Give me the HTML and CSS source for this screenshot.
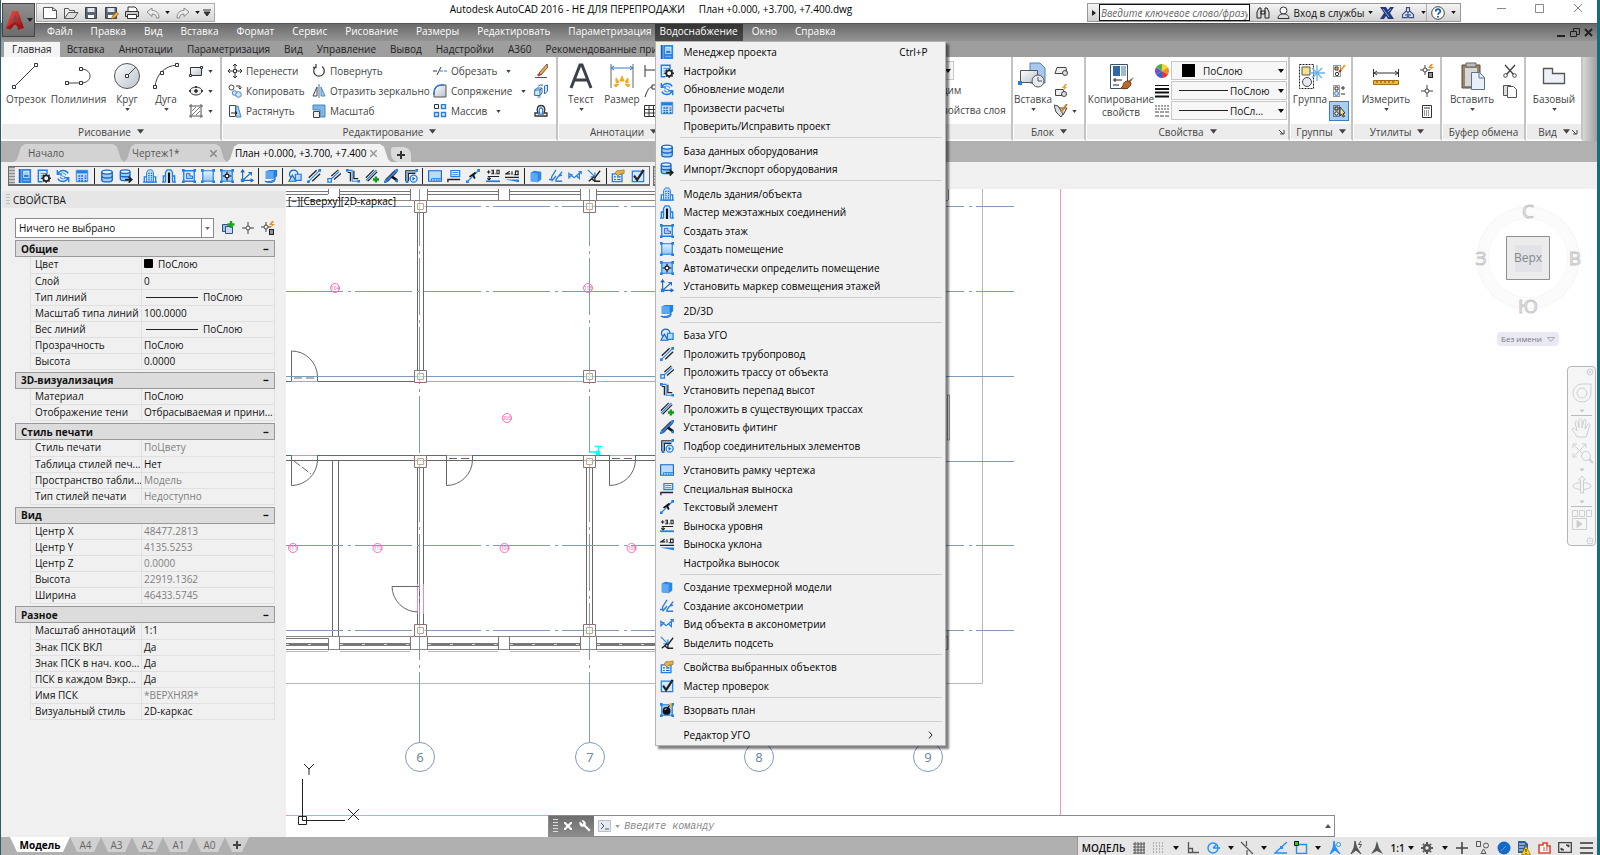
FILE: index.html
```html
<!DOCTYPE html>
<html lang="ru">
<head>
<meta charset="utf-8">
<title>Autodesk AutoCAD 2016 - План +0.000, +3.700, +7.400.dwg</title>
<link rel="stylesheet" href="styles.css">
</head>
<body>
<svg class="defs" aria-hidden="true">
  <defs>
    <linearGradient id="g-blue" x1="0" y1="0" x2="0" y2="1"><stop offset="0" stop-color="#e4f2ff"/><stop offset="1" stop-color="#8fc4f7"/></linearGradient>
    <linearGradient id="g-grey" x1="0" y1="0" x2="1" y2="1"><stop offset="0" stop-color="#fff"/><stop offset="1" stop-color="#b9c2cc"/></linearGradient>
    <linearGradient id="g-red" x1="0" y1="0" x2="1" y2="1"><stop offset="0" stop-color="#f0554d"/><stop offset="1" stop-color="#8c0a0c"/></linearGradient>
  </defs>
  <symbol id="caret" viewBox="0 0 6 4"><path d="M0 0h6L3 4z" fill="currentColor"/></symbol>
  <symbol id="launch" viewBox="0 0 6 6"><path d="M0 1l4 4M5 1v4H1" fill="none" stroke="currentColor"/></symbol>

  <symbol id="manager" viewBox="0 0 16 16"><path d="M1 0h14v16H1z" fill="#2b86ea"/><path d="M1 0h3v16H1z" fill="#0d5cb8"/><path d="M3.500 0v16" stroke="#9ccbff"/><path d="M6 2h7v8H6z" fill="#e4f2ff"/><path d="M7 3h5v4H7z" fill="#9fcbf8"/><path d="M7 7h5v2H7z" fill="#1668c4"/><path d="M6 13h7" stroke="#7db9f7"/></symbol>
  <symbol id="settings" viewBox="0 0 16 16"><path d="M1.500 14.500V1.500h10v4M1 14.500h5" fill="#dcecff" stroke="#1f7fe6" stroke-width="1.600"/><path d="M4 5h6M4 8h3M4 11h1.500" stroke="#1f7fe6"/><circle cx="10.500" cy="10.500" r="3.300" fill="#fff" stroke="#222" stroke-width="2"/><path d="M10.500 5v2M10.500 14v2M5 10.500h2M14 10.500h2M6.700 6.700l1.200 1.200M13.200 13.200l1.200 1.200M14.300 6.700l-1.200 1.200M7.900 13.200l-1.200 1.200" stroke="#222" stroke-width="1.600"/></symbol>
  <symbol id="refresh" viewBox="0 0 16 16"><path d="M1.500 1v5h5M2 5.500C5 .5 11 .5 14 5M14.500 15v-5h-5M14 10.500C11 15.500 5 15.500 2 11" fill="none" stroke="#1f7fe6" stroke-width="1.600"/><path d="M4.500 6c2-2 5-2 7 1M11.500 10c-2 2-5 2-7-1M4.500 6c1 3 4 1 7 4" fill="none" stroke="#4a9aeb" stroke-width="1.200"/></symbol>
  <symbol id="calc" viewBox="0 0 16 16"><path d="M1.500 1.500h13v13h-13z" fill="#b9dafa" stroke="#1f7fe6"/><path d="M2 2h12v3H2z" fill="#1f7fe6"/><path d="M4 8h2M7 8h2M4 11h2M7 11h2M4 13.500h2M7 13.500h2M11 10.500h2M11 13.500h2" stroke="#1668c4" stroke-width="1.600"/><path d="M11 8h2" stroke="#e4472f" stroke-width="1.600"/></symbol>
  <symbol id="db" viewBox="0 0 16 16"><path d="M2 3.500v9c0 3 12 3 12 0v-9" fill="#9fcbf8" stroke="#1668c4" stroke-width="1.500"/><ellipse cx="8" cy="3.500" rx="6" ry="2.300" fill="#e4f2ff" stroke="#1668c4" stroke-width="1.500"/><path d="M2 8c0 3 12 3 12 0" fill="none" stroke="#1668c4" stroke-width="1.500"/></symbol>
  <symbol id="dbx" viewBox="0 0 16 16"><path d="M1.500 3.500v8c0 2.500 11 2.500 11 0v-8" fill="#9fcbf8" stroke="#1668c4" stroke-width="1.500"/><ellipse cx="7" cy="3" rx="5.500" ry="2" fill="#e4f2ff" stroke="#1668c4" stroke-width="1.500"/><path d="M1.500 7c0 2.500 11 2.500 11 0" fill="none" stroke="#1668c4" stroke-width="1.500"/><path d="M7 12h6M11 9l3.500 3L11 15.500" fill="none" stroke="#222" stroke-width="2"/></symbol>
  <symbol id="build" viewBox="0 0 16 16"><path d="M4 15V4l2-3h4l2 3v11z" fill="#b9dafa" stroke="#1f7fe6"/><path d="M1.500 15V9H4M14.500 15V9H12M0 15h16" fill="none" stroke="#1f7fe6" stroke-width="1.500"/><path d="M6 5h1.500M9 5h1.500M6 7.500h1.500M9 7.500h1.500M6 10h1.500M9 10h1.500M6 12.500h1.500M9 12.500h1.500" stroke="#1668c4" stroke-width="1.300"/></symbol>
  <symbol id="wizard" viewBox="0 0 16 16"><path d="M4 15V4l2-3h4l2 3v11" fill="#d9ebff" stroke="#1f7fe6" stroke-width="1.500"/><path d="M1.500 15V8H4M14.500 15V8H12M0 15h4M12 15h4" fill="none" stroke="#1f7fe6" stroke-width="1.500"/><path d="M8 4v12" stroke="#111" stroke-width="2.500"/></symbol>
  <symbol id="floor" viewBox="0 0 16 16"><path d="M2 2h12v12H2z" fill="#dcecff" stroke="#1f7fe6" stroke-width="1.500"/><path d="M5 5v6h7V8H9V5z" fill="#9fcbf8" stroke="#1668c4"/><path d="M0 0h3v3H0zM13 0h3v3h-3zM0 13h3v3H0zM13 13h3v3h-3z" fill="#1f7fe6"/></symbol>
  <symbol id="room" viewBox="0 0 16 16"><path d="M2 2h12v12H2z" fill="url(#g-blue)" stroke="#1f7fe6" stroke-width="1.300"/><path d="M0 0h3v3H0zM13 0h3v3h-3zM0 13h3v3H0zM13 13h3v3h-3z" fill="#1f7fe6"/></symbol>
  <symbol id="auto" viewBox="0 0 16 16"><path d="M2 2h12v12H2z" fill="#9fcbf8" stroke="#1f7fe6" stroke-width="1.300"/><path d="M0 0h3v3H0zM13 0h3v3h-3zM0 13h3v3H0zM13 13h3v3h-3z" fill="#1f7fe6"/><path d="M8 3v10M3 8h10" stroke="#111" stroke-width="1.300"/><circle cx="8" cy="8" r="2.200" fill="#fff" stroke="#111" stroke-width="1.300"/></symbol>
  <symbol id="marker" viewBox="0 0 16 16"><path d="M3 1v12h12M3 13l10-9M1 4l2-3 2 3M12 11l3 2-3 2M9.500 4H13v3.500" fill="none" stroke="#1668c4" stroke-width="1.300"/><path d="M1 11h4v4H1z" fill="#1f7fe6"/></symbol>
  <symbol id="mode3d" viewBox="0 0 16 16"><path d="M2 2.500L6 1h9v7l-3 3H2z" fill="#1f7fe6"/><path d="M2 2.500h9V11H2z" fill="#5ba9f5"/><path d="M1 14c4 1 9 0 12-3l-1 3c-3 2-8 2-11 0z" fill="#5ba9f5" stroke="#1668c4"/></symbol>
  <symbol id="ugo" viewBox="0 0 16 16"><circle cx="6.500" cy="6" r="4.800" fill="#dcecff" stroke="#1668c4" stroke-width="1.400"/><path d="M1 14l4-7 4 7z" fill="#b9dafa" stroke="#1668c4" stroke-width="1.200"/><path d="M8.500 6h6.500v7H8.500z" fill="#b9dafa" stroke="#1f7fe6" stroke-width="1.400"/></symbol>
  <symbol id="pipe" viewBox="0 0 16 16"><path d="M2 10L11 1.500M6 14L15 5.500" stroke="#222" stroke-width="1.500"/><path d="M1.500 14.500L14.500 1.500" stroke="#2b86ea" stroke-width="1.300"/><path d="M0 13h3v3H0zM13 0h3v3h-3z" fill="#1f7fe6"/></symbol>
  <symbol id="trace" viewBox="0 0 16 16"><path d="M5 8l8-7M8 12l8-7" stroke="#222" stroke-width="1.400"/><path d="M4 12L14 3" stroke="#2b86ea" stroke-width="1.400"/><path d="M1 11h4v4H1z" fill="#fff" stroke="#1f7fe6" stroke-width="1.500"/></symbol>
  <symbol id="drop" viewBox="0 0 16 16"><path d="M2 4h3v10M9 2v9h5" fill="none" stroke="#222" stroke-width="1.400"/><path d="M1 1.500h6V14h7" fill="none" stroke="#2b86ea" stroke-width="1.300"/><path d="M0 0h3v3H0zM13 12.500h3v3h-3z" fill="#1f7fe6"/></symbol>
  <symbol id="exist" viewBox="0 0 16 16"><path d="M1 10L10 1M3 14L14 3" stroke="#222" stroke-width="1.300"/><path d="M1 13L13 1" stroke="#2b86ea" stroke-width="1.400"/><path d="M12.500 8.500v7M9 12h7" stroke="#139a1c" stroke-width="2.800"/></symbol>
  <symbol id="fitting" viewBox="0 0 16 16"><path d="M1 12L12 1l3 3L4 15z" fill="#3d4c60"/><path d="M8 8l7 5" stroke="#111" stroke-width="3"/><path d="M2 14L14 2.500" stroke="#2b86ea" stroke-width="1.500"/><path d="M0 13h3v3H0zM13 0h3v3h-3zM13 12h3v3h-3z" fill="#1f7fe6"/></symbol>
  <symbol id="connect" viewBox="0 0 16 16"><path d="M2 14V2h11M5 14V5h8" fill="none" stroke="#222" stroke-width="1.300"/><path d="M3.500 14V3.500H14" fill="none" stroke="#2b86ea"/><path d="M13 0h3v3h-3zM2 13h3v3H2z" fill="#1f7fe6"/><circle cx="11" cy="11" r="4" fill="#dcecff" stroke="#1f7fe6" stroke-width="1.500"/><path d="M9.700 8.800v4.400l3.300-2.200z" fill="#1668c4"/></symbol>
  <symbol id="frame" viewBox="0 0 16 16"><path d="M.7 2h14.600v12H.7z" fill="#b9dafa" stroke="#1668c4" stroke-width="1.300"/><path d="M4 14v-3h11M7 11v3M10 11v3M12.500 11v3" fill="none" stroke="#1f7fe6"/></symbol>
  <symbol id="callout" viewBox="0 0 16 16"><path d="M4.500 1.700h10v7h-10z" fill="#dcecff" stroke="#1f7fe6" stroke-width="1.400"/><path d="M6 4h7M6 6.500h7" stroke="#1f7fe6"/><path d="M1 15v-3h14" fill="none" stroke="#222" stroke-width="1.500"/></symbol>
  <symbol id="textel" viewBox="0 0 16 16"><path d="M2 14L14 2" stroke="#2b86ea" stroke-width="1.300"/><path d="M4 9l7-5M8 6l2 5" stroke="#111" stroke-width="2"/><path d="M0 13h3v3H0zM13 0h3v3h-3z" fill="#1f7fe6"/></symbol>
  <symbol id="level" viewBox="0 0 16 16"><path d="M1 3.500h4M3 1.500v4M6 1.500h2.500v4H6M6.500 3.500h2M10 5.500h1M12.500 1.500H15v4h-2.500zM2 8.500h13M3.500 8.500v4M1.500 10.500l2 2 2-2" fill="none" stroke="#222" stroke-width="1.200"/><path d="M0 14h16" stroke="#1f7fe6" stroke-width="2"/></symbol>
  <symbol id="slope" viewBox="0 0 16 16"><path d="M5.500 2.500L1 5.500h5M8 2.500v4M10 6.500h1M12 2.500h3v4h-3zM0 9.500h16" fill="none" stroke="#222" stroke-width="1.300"/><path d="M0 12h16v3z" fill="#1f7fe6"/></symbol>
  <symbol id="cube" viewBox="0 0 16 16"><path d="M2 4l4-2 8 1v9l-4 3-8-1z" fill="#2b86ea"/><path d="M2 4l8 1v10l-8-1z" fill="#5ba9f5"/></symbol>
  <symbol id="axo" viewBox="0 0 16 16"><path d="M8 1L3 9v3H0M8 8l-5 6M15 3L8 12v2h7M11 8l4-1" fill="none" stroke="#2b7fdc" stroke-width="1.500"/></symbol>
  <symbol id="objaxo" viewBox="0 0 16 16"><path d="M1 11V5l6 5 6-5v6l-3-3M1 10l4-4M8 9l7-6M12 3h3v3" fill="none" stroke="#2b7fdc" stroke-width="1.400"/></symbol>
  <symbol id="subnet" viewBox="0 0 16 16"><path d="M1 1l8 8M9 4v5H4" fill="none" stroke="#2b86ea" stroke-width="1.500"/><path d="M15 2l-6 8v4h6M8 9l-6 5M5 11l4 3" fill="none" stroke="#222" stroke-width="1.500"/></symbol>
  <symbol id="props" viewBox="0 0 16 16"><path d="M1.500 5.500h11v9h-11z" fill="#dcecff" stroke="#1f7fe6" stroke-width="1.500"/><path d="M3.500 9h2M7 9h4M3.500 12h2M7 12h4" stroke="#1668c4" stroke-width="1.300"/><path d="M5 5c0-3 3-4 5-3l5-1v4l-5 1-2 2z" fill="#e3b04b" stroke="#8a6418" stroke-width=".7"/></symbol>
  <symbol id="check" viewBox="0 0 16 16"><path d="M1.500 2.500h13v12h-13z" fill="#d4e8fd" stroke="#1f7fe6" stroke-width="1.400"/><path d="M3.500 7.500l3.500 5L14.500 1" fill="none" stroke="#222" stroke-width="2.500"/></symbol>
  <symbol id="bomb" viewBox="0 0 16 16"><path d="M2 2h12v12H2z" fill="#9fcbf8" stroke="#1f7fe6" stroke-width="1.300"/><path d="M0 0h3v3H0zM13 0h3v3h-3zM0 13h3v3H0zM13 13h3v3h-3z" fill="#1f7fe6"/><circle cx="7.500" cy="9" r="4.500" fill="#111"/><path d="M9 5l3-3" stroke="#111" stroke-width="1.500"/><path d="M10 0l3 1 1 4-3-1z" fill="#f2b61b"/><path d="M5.500 8a2 2 0 0 1 2-1.500" stroke="#fff" fill="none"/></symbol>

  <symbol id="new" viewBox="0 0 16 14"><path d="M1.500 1.500h9l4 3v8h-13z" fill="#fff" stroke="#555"/><path d="M10.500 1.500v3h4" fill="none" stroke="#555"/></symbol>
  <symbol id="open" viewBox="0 0 16 14"><path d="M1.500 12.500v-10h4l1 2h5v2" fill="#eee" stroke="#555"/><path d="M1.500 12.500l4-6h9.500l-4 6z" fill="#ddd" stroke="#555"/></symbol>
  <symbol id="save" viewBox="0 0 14 14"><path d="M1.500 1.500h11v11h-11z" fill="#5a6470" stroke="#39424c"/><path d="M3.500 2h7v4h-7z" fill="#dfe6ee"/><path d="M4 9h6v3H4z" fill="#fff"/></symbol>
  <symbol id="saveas" viewBox="0 0 15 14"><path d="M1.500 1.500h11v11h-11z" fill="#5a6470" stroke="#39424c"/><path d="M3.500 2h7v4h-7z" fill="#dfe6ee"/><path d="M4 9h5v3H4z" fill="#fff"/><path d="M7.500 13l1-3 4-4 2 2-4 4z" fill="#f0b030" stroke="#8a5a10" stroke-width=".7"/></symbol>
  <symbol id="print" viewBox="0 0 16 14"><path d="M4 5V1h7l2 2v2" fill="#fff" stroke="#333"/><path d="M1.500 5.500h13v5h-13z" fill="#ccc" stroke="#333"/><path d="M3.500 8.500h9v4h-9z" fill="#fff" stroke="#333"/></symbol>
  <symbol id="undo" viewBox="0 0 14 12"><path d="M1 5l5-4v2.500c4 0 7 2 7 7.500h-2.500C10.500 8 9 7 6 7v2.500z" fill="#eee" stroke="#8a8a8a"/></symbol>
  <symbol id="redo" viewBox="0 0 14 12"><path d="M13 5L8 1v2.500C4 3.500 1 5.500 1 11h2.500C3.500 8 5 7 8 7v2.500z" fill="#eee" stroke="#8a8a8a"/></symbol>
  <symbol id="point" viewBox="0 0 12 12"><path d="M6 0v12M0 6h12" stroke="#444"/><circle cx="6" cy="6" r="2" fill="#fff" stroke="#444"/></symbol>
  <symbol id="quick" viewBox="0 0 14 14"><path d="M5 1v10M0 6h10" stroke="#444"/><circle cx="5" cy="6" r="2" fill="#fff" stroke="#444"/><path d="M11 0l-3 4h3l-2 3 5-4h-3l2-3z" fill="#f28a1c"/><path d="M8 8h5v6H8z" fill="#222"/><path d="M9 10h3M9 12h3" stroke="#fff"/></symbol>
</svg>

<div class="app">
  <header class="header">
    <button class="app-button" aria-label="Меню приложения">
      <svg width="20" height="22" viewBox="0 0 20 22"><path d="M1 19L7 2h6l6 17-6 2-1-5H8l-3 5z" fill="url(#g-red)"/><path d="M8 12l2-6 2 6z" fill="#555"/><path d="M1 19l9-6 9 6-5 0-4-4-4 5z" fill="#a01316"/></svg>
      <svg width="6" height="4"><use href="#caret"/></svg>
    </button>
    <div class="titlebar">
      <div class="quick-access">
        <button aria-label="Создать"><svg width="16" height="14"><use href="#new"/></svg></button>
        <button aria-label="Открыть"><svg width="16" height="14"><use href="#open"/></svg></button>
        <button aria-label="Сохранить"><svg width="14" height="14"><use href="#save"/></svg></button>
        <button aria-label="Сохранить как"><svg width="15" height="14"><use href="#saveas"/></svg></button>
        <button aria-label="Печать"><svg width="16" height="14"><use href="#print"/></svg></button>
        <button aria-label="Отменить"><svg width="14" height="12"><use href="#undo"/></svg></button>
        <button class="slim" aria-label="Список отмен"><svg width="5" height="3"><use href="#caret"/></svg></button>
        <button aria-label="Повторить"><svg width="14" height="12"><use href="#redo"/></svg></button>
        <button class="slim" aria-label="Список повторов"><svg width="5" height="3"><use href="#caret"/></svg></button>
        <button class="slim" aria-label="Настроить панель"><svg width="8" height="8" viewBox="0 0 8 8"><path d="M0 1h8M1 3h6l-3 4z" stroke="#333" fill="#333"/></svg></button>
      </div>
      <h1 class="title"><span>Autodesk AutoCAD 2016 - НЕ ДЛЯ ПЕРЕПРОДАЖИ</span><span>План +0.000, +3.700, +7.400.dwg</span></h1>
      <div class="infocenter">
        <button class="expand" aria-label="Свернуть поиск"><svg width="4" height="6" viewBox="0 0 4 6"><path d="M0 0l4 3-4 3z" fill="#222"/></svg></button>
        <input class="search" type="text" aria-label="Поиск" placeholder="Введите ключевое слово/фразу">
        <button aria-label="Найти"><svg width="14" height="13" viewBox="0 0 14 13"><path d="M1 12V6l2-4h2v10zM13 12V6l-2-4H9v10zM5 5h4v3H5z" fill="#ddd" stroke="#222"/></svg></button>
        <button class="sign-in"><svg width="13" height="13" viewBox="0 0 13 13"><circle cx="6.500" cy="4.500" r="3.500" fill="#fff" stroke="#333"/><path d="M1 12.500c0-3 2-4 4-4.500h3c2 .5 4 1.500 4 4.500z" fill="#ddd" stroke="#333"/></svg>Вход в службы<svg width="5" height="3"><use href="#caret"/></svg></button>
        <button aria-label="Exchange"><svg width="14" height="12" viewBox="0 0 14 12"><path d="M0 0h6l2 3 2-3h4l-4 6 4 6H8L6 9l-2 3H0l4-6z" fill="#253a7c"/><path d="M3 2l6 8M11 2L8 5" stroke="#7fb2ee"/></svg></button>
        <button aria-label="A360"><svg width="14" height="12" viewBox="0 0 14 12"><path d="M5.500.7h3v3l4 4v3H8l-1-1.500-1 1.500H1.500v-3l4-4zM5.500 4l3 4M8.500 4l-3 4M4 8h6" fill="none" stroke="#35518f" stroke-width="1.200"/></svg><svg width="5" height="3"><use href="#caret"/></svg></button>
        <button class="help" aria-label="Справка"><svg width="14" height="14" viewBox="0 0 14 14"><circle cx="7" cy="7" r="6.300" fill="#fff" stroke="#444"/><path d="M4.800 5.500c0-3 4.500-3 4.500-.3C9.300 7 7 6.800 7 8.800M7 10v1.600" fill="none" stroke="#1858b8" stroke-width="1.800"/></svg><svg width="5" height="3"><use href="#caret"/></svg></button>
      </div>
      <div class="window-controls">
        <button aria-label="Свернуть"><svg width="10" height="10" viewBox="0 0 10 10"><path d="M0 5.500h9" stroke="#888"/></svg></button>
        <button aria-label="Развернуть"><svg width="10" height="10" viewBox="0 0 10 10"><path d="M.5 1.500h8v8h-8z" fill="none" stroke="#888"/></svg></button>
        <button aria-label="Закрыть"><svg width="10" height="10" viewBox="0 0 10 10"><path d="M1 1l8 8M9 1L1 9" stroke="#888"/></svg></button>
      </div>
    </div>
    <nav class="menubar" aria-label="Главное меню">
      <button>Файл</button><button>Правка</button><button>Вид</button><button>Вставка</button><button>Формат</button><button>Сервис</button><button>Рисование</button><button>Размеры</button><button>Редактировать</button><button class="last">Параметризация</button>
      <div class="menu-open">
        <button aria-expanded="true">Водоснабжение</button>
        <ul class="dropdown" role="menu">
          <li><button><svg class="ico"><use href="#manager"/></svg>Менеджер проекта<kbd>Ctrl+P</kbd></button></li>
          <li><button><svg class="ico"><use href="#settings"/></svg>Настройки</button></li>
          <li><button><svg class="ico"><use href="#refresh"/></svg>Обновление модели</button></li>
          <li><button><svg class="ico"><use href="#calc"/></svg>Произвести расчеты</button></li>
          <li><button><i class="ico"></i>Проверить/Исправить проект</button></li>
          <li class="divider"></li>
          <li><button><svg class="ico"><use href="#db"/></svg>База данных оборудования</button></li>
          <li><button><svg class="ico"><use href="#dbx"/></svg>Импорт/Экспорт оборудования</button></li>
          <li class="divider"></li>
          <li><button><svg class="ico"><use href="#build"/></svg>Модель здания/объекта</button></li>
          <li><button><svg class="ico"><use href="#wizard"/></svg>Мастер межэтажных соединений</button></li>
          <li><button><svg class="ico"><use href="#floor"/></svg>Создать этаж</button></li>
          <li><button><svg class="ico"><use href="#room"/></svg>Создать помещение</button></li>
          <li><button><svg class="ico"><use href="#auto"/></svg>Автоматически определить помещение</button></li>
          <li><button><svg class="ico"><use href="#marker"/></svg>Установить маркер совмещения этажей</button></li>
          <li class="divider"></li>
          <li><button><svg class="ico"><use href="#mode3d"/></svg>2D/3D</button></li>
          <li class="divider"></li>
          <li><button><svg class="ico"><use href="#ugo"/></svg>База УГО</button></li>
          <li><button><svg class="ico"><use href="#pipe"/></svg>Проложить трубопровод</button></li>
          <li><button><svg class="ico"><use href="#trace"/></svg>Проложить трассу от объекта</button></li>
          <li><button><svg class="ico"><use href="#drop"/></svg>Установить перепад высот</button></li>
          <li><button><svg class="ico"><use href="#exist"/></svg>Проложить в существующих трассах</button></li>
          <li><button><svg class="ico"><use href="#fitting"/></svg>Установить фитинг</button></li>
          <li><button><svg class="ico"><use href="#connect"/></svg>Подбор соединительных элементов</button></li>
          <li class="divider"></li>
          <li><button><svg class="ico"><use href="#frame"/></svg>Установить рамку чертежа</button></li>
          <li><button><svg class="ico"><use href="#callout"/></svg>Специальная выноска</button></li>
          <li><button><svg class="ico"><use href="#textel"/></svg>Текстовый элемент</button></li>
          <li><button><svg class="ico"><use href="#level"/></svg>Выноска уровня</button></li>
          <li><button><svg class="ico"><use href="#slope"/></svg>Выноска уклона</button></li>
          <li><button><i class="ico"></i>Настройка выносок</button></li>
          <li class="divider"></li>
          <li><button><svg class="ico"><use href="#cube"/></svg>Создание трехмерной модели</button></li>
          <li><button><svg class="ico"><use href="#axo"/></svg>Создание аксонометрии</button></li>
          <li><button><svg class="ico"><use href="#objaxo"/></svg>Вид объекта в аксонометрии</button></li>
          <li><button><svg class="ico"><use href="#subnet"/></svg>Выделить подсеть</button></li>
          <li class="divider"></li>
          <li><button><svg class="ico"><use href="#props"/></svg>Свойства выбранных объектов</button></li>
          <li><button><svg class="ico"><use href="#check"/></svg>Мастер проверок</button></li>
          <li class="divider"></li>
          <li><button><svg class="ico"><use href="#bomb"/></svg>Взорвать план</button></li>
          <li class="divider"></li>
          <li><button><i class="ico"></i>Редактор УГО<svg class="sub" width="5" height="8" viewBox="0 0 5 8"><path d="M1 .5L4 4 1 7.500" fill="none" stroke="#222"/></svg></button></li>
        </ul>
      </div>
      <button>Окно</button><button>Справка</button>
      <div class="doc-controls">
        <button aria-label="Свернуть документ"><svg width="10" height="10" viewBox="0 0 10 10"><path d="M1 8h8" stroke="#222" stroke-width="2"/></svg></button>
        <button aria-label="Восстановить документ"><svg width="10" height="10" viewBox="0 0 10 10"><path d="M3.500 3V.5h6v6H7M.5 3.500h6v5h-6z" fill="none" stroke="#222"/></svg></button>
        <button aria-label="Закрыть документ"><svg width="9" height="9" viewBox="0 0 9 9"><path d="M1 1l7 7M8 1L1 8" stroke="#222" stroke-width="2"/></svg></button>
      </div>
    </nav>
  </header>

  <nav class="ribbon-tabs" aria-label="Лента">
    <button class="active">Главная</button><button>Вставка</button><button>Аннотации</button><button>Параметризация</button><button>Вид</button><button>Управление</button><button>Вывод</button><button>Надстройки</button><button>A360</button><button>Рекомендованные приложения</button>
  </nav>

  <section class="ribbon">
    <div class="panel p-draw">
      <div class="panel-body">
        <button class="big"><svg width="30" height="30" viewBox="0 0 30 30"><path d="M3 26L25 4" stroke="#444"/><path d="M1.500 24.500h3v3h-3zM23.500 2.500h3v3h-3z" fill="#fff" stroke="#333"/></svg>Отрезок</button>
        <button class="big"><svg width="30" height="30" viewBox="0 0 30 30"><path d="M3 22h14M17 22c12 0 12-14 0-14" fill="none" stroke="#444"/><path d="M1.500 20.500h3v3h-3zM15.500 20.500h3v3h-3zM15.500 6.500h3v3h-3z" fill="#fff" stroke="#333"/></svg>Полилиния</button>
        <button class="big"><svg width="30" height="30" viewBox="0 0 30 30"><circle cx="15" cy="15" r="12.500" fill="url(#g-grey)" stroke="#555"/><path d="M15 15l9-9" stroke="#444"/><path d="M13.500 13.500h3v3h-3z" fill="#fff" stroke="#333"/></svg>Круг<svg class="drop" width="5" height="3"><use href="#caret"/></svg></button>
        <button class="big"><svg width="30" height="30" viewBox="0 0 30 30"><path d="M4 26C5 14 13 5 26 4" fill="none" stroke="#444"/><path d="M2.500 24.500h3v3h-3zM9.500 10.500h3v3h-3zM24.500 2.500h3v3h-3z" fill="#fff" stroke="#333"/></svg>Дуга<svg class="drop" width="5" height="3"><use href="#caret"/></svg></button>
        <div class="rows">
          <button aria-label="Прямоугольник"><svg width="16" height="16" viewBox="0 0 16 16"><path d="M2.500 4.500h11v8h-11z" fill="url(#g-grey)" stroke="#333"/><path d="M1.500 11.500h2v2h-2zM12.500 3.500h2v2h-2z" fill="#fff" stroke="#333"/></svg><svg width="5" height="3"><use href="#caret"/></svg></button>
          <button aria-label="Эллипс"><svg width="16" height="16" viewBox="0 0 16 16"><ellipse cx="8" cy="8" rx="6" ry="4" fill="#eee" stroke="#333"/><path d="M8 6v4M6 8h4M1 8h2M13 8h2M8 3v2" stroke="#222" stroke-width="1.500"/></svg><svg width="5" height="3"><use href="#caret"/></svg></button>
          <button aria-label="Штриховка"><svg width="16" height="16" viewBox="0 0 16 16"><path d="M3 1v14M13 1v14M1 3h14M1 13h14" stroke="#555"/><path d="M4 8l4-4M4 12l8-8M8 12l4-4" stroke="#777"/></svg><svg width="5" height="3"><use href="#caret"/></svg></button>
        </div>
      </div>
      <button class="panel-title">Рисование<svg width="7" height="5"><use href="#caret"/></svg></button>
    </div>

    <div class="panel p-edit">
      <div class="panel-body">
        <div class="rows">
          <button><svg width="14" height="14" viewBox="0 0 14 14"><path d="M7 0v14M0 7h14M5 2l2-2 2 2M5 12l2 2 2-2M2 5L0 7l2 2M12 5l2 2-2 2" fill="none" stroke="#333"/><path d="M5.500 5.500h3v3h-3z" fill="#fff" stroke="#333"/></svg>Перенести</button>
          <button><svg width="14" height="14" viewBox="0 0 14 14"><circle cx="3.500" cy="3.500" r="2.500" fill="#fff" stroke="#444"/><circle cx="6.500" cy="9" r="2.300" fill="#cfe4f8" stroke="#4b87bd"/><circle cx="10.500" cy="10.500" r="2.800" fill="#cfe4f8" stroke="#4b87bd"/><path d="M8 2h4v3M10.500 3.500L12 5l1.500-1.500" fill="none" stroke="#333"/></svg>Копировать</button>
          <button><svg width="14" height="14" viewBox="0 0 14 14"><path d="M1.500 1.500h6v11h-6z" fill="#fff" stroke="#444"/><path d="M8 2h2l3 11H8z" fill="#a8cdee" stroke="#4b87bd"/><path d="M3 9h6M7 7l2 2-2 2" fill="none" stroke="#222"/></svg>Растянуть</button>
        </div>
        <div class="rows">
          <button><svg width="14" height="14" viewBox="0 0 14 14"><path d="M4 2.500a5.300 5.300 0 1 0 6 0M4 0v3.500H1" fill="none" stroke="#444" stroke-width="1.300"/></svg>Повернуть</button>
          <button><svg width="14" height="14" viewBox="0 0 14 14"><path d="M5 3v9H1z" fill="#fff" stroke="#444"/><path d="M9 3v9h4z" fill="#a8cdee" stroke="#4b87bd"/><path d="M7 0v14" stroke="#3b76ad"/></svg>Отразить зеркально</button>
          <button><svg width="14" height="14" viewBox="0 0 14 14"><path d="M1 1h12v12H8V6H1z" fill="#7db5e8" stroke="#4b87bd"/><path d="M1.500 7.500h6v6h-6z" fill="#eee" stroke="#444"/></svg>Масштаб</button>
        </div>
        <div class="rows">
          <button><svg width="14" height="14" viewBox="0 0 14 14"><path d="M0 7h4M8 3l-4 8" stroke="#333"/><path d="M7 7h3M11 7h3" stroke="#2f7bd0"/></svg>Обрезать<svg class="gap" width="5" height="3"><use href="#caret"/></svg></button>
          <button><svg width="14" height="14" viewBox="0 0 14 14"><path d="M1 13V9C1 4 4 1 9 1h4v12z" fill="url(#g-grey)" stroke="#555"/><path d="M1 11V9C1 4 4 1 9 1h2" fill="none" stroke="#2f7bd0" stroke-width="1.500"/></svg>Сопряжение<svg class="gap" width="5" height="3"><use href="#caret"/></svg></button>
          <button><svg width="14" height="14" viewBox="0 0 14 14"><path d="M1.500.5h4v4h-4z" fill="#fff" stroke="#333"/><path d="M8.500.5h4v4h-4zM1.500 8.500h4v4h-4zM8.500 8.500h4v4h-4z" fill="#d6e9fb" stroke="#2f7bd0" stroke-width="1.400"/></svg>Массив<svg class="gap" width="5" height="3"><use href="#caret"/></svg></button>
        </div>
        <div class="rows">
          <button aria-label="Стереть"><svg width="14" height="14" viewBox="0 0 14 14"><path d="M13 0L5 9l2 2 7-8z" fill="#e8a85a" stroke="#5a3a18" stroke-width=".8"/><path d="M5 9l-2 2 1.500 1.500L7 11z" fill="#c33"/><path d="M1 13.500h12" stroke="#555"/></svg></button>
          <button aria-label="Расчленить"><svg width="14" height="14" viewBox="0 0 14 14"><path d="M.7 6l2-2H8v5l-2 2.500H.7zM.7 6H6v5.500M6 6l2-2M4 2.500L6 1h3M10.500 2l3-1v6l-3 3zM3.500 13h3" fill="#d6e9fb" stroke="#2f6fae"/></svg></button>
          <button aria-label="Подобие"><svg width="14" height="14" viewBox="0 0 14 14"><path d="M1 12V9h3C2 4 4 1.500 7 1.500S12 4 10 9h3v3z" fill="none" stroke="#333" stroke-width="1.300"/><path d="M4 10h2C4.500 6 5 4 7 4s2.500 2 1 6h2" fill="none" stroke="#2f7bd0" stroke-width="1.300"/></svg></button>
        </div>
      </div>
      <button class="panel-title">Редактирование<svg width="7" height="5"><use href="#caret"/></svg></button>
    </div>

    <div class="panel p-anno">
      <div class="panel-body">
        <button class="big"><svg width="30" height="30" viewBox="0 0 30 30"><path d="M5 27L14 4h2l9 23M9 19h12" fill="none" stroke="#3c4048" stroke-width="3"/></svg>Текст<svg class="drop" width="5" height="3"><use href="#caret"/></svg></button>
        <button class="big"><svg width="30" height="30" viewBox="0 0 30 30"><path d="M4 3v24M26 3v24" stroke="#666"/><path d="M4 7h22M7 5L4 7l3 2M23 5l3 2-3 2" stroke="#2f7bd0" fill="none"/><path d="M15 15l2 5h-4zM9 17l3 4-3 1zM21 17l-3 4 3 1zM7 24l5-1-3 3zM23 24l-5-1 3 3z" fill="#f5a623" stroke="#f5a623"/></svg>Размер</button>
        <div class="rows">
          <button aria-label="Линейный"><svg width="14" height="14" viewBox="0 0 14 14"><path d="M1 1v12M1 6h13" stroke="#333"/></svg></button>
          <button aria-label="Выноска"><svg width="14" height="14" viewBox="0 0 14 14"><path d="M1 13C4 4 6 3 8 3M8 1h4v4H8z" fill="none" stroke="#333"/></svg></button>
          <button aria-label="Таблица"><svg width="14" height="14" viewBox="0 0 14 14"><path d="M.5 1.500h13v11H.5zM.5 5.500h13M.5 9h13M5 2v11M9.500 2v11" fill="#fff" stroke="#333"/></svg></button>
        </div>
      </div>
      <button class="panel-title">Аннотации<svg width="7" height="5"><use href="#caret"/></svg></button>
    </div>

    <div class="panel p-layers">
      <div class="panel-body">
        <div class="rows">
          <div class="combo"><select aria-label="Слой"><option>0</option></select><svg width="6" height="4"><use href="#caret"/></svg></div>
          <button>Сделать текущим</button>
          <button>Копировать свойства слоя</button>
        </div>
      </div>
      <button class="panel-title">Слои<svg width="7" height="5"><use href="#caret"/></svg></button>
    </div>

    <div class="panel p-block">
      <div class="panel-body">
        <button class="big"><svg width="30" height="30" viewBox="0 0 30 30"><path d="M12 2h10l5 5v15H12z" fill="#a9c8ee" stroke="#5580b8"/><path d="M2.500 9.500h17v12h-17z" fill="url(#g-grey)" stroke="#555"/><circle cx="20" cy="20" r="6" fill="#e6eaef" stroke="#555"/><path d="M20 16v4h4" fill="none" stroke="#555"/><path d="M0 20h4v4H0z" fill="#2f7bd0"/></svg>Вставка<svg class="drop" width="5" height="3"><use href="#caret"/></svg></button>
        <div class="rows">
          <button aria-label="Создать блок"><svg width="14" height="14" viewBox="0 0 14 14"><path d="M3 3.500h9l1 6H1z" fill="#eee" stroke="#444"/><circle cx="11" cy="9" r="2.500" fill="#ddd" stroke="#444"/></svg></button>
          <button aria-label="Редактор блоков"><svg width="14" height="14" viewBox="0 0 14 14"><path d="M1.500 5.500h8v6h-8z" fill="#eee" stroke="#444"/><circle cx="10" cy="10" r="2.500" fill="#ddd" stroke="#444"/><path d="M11 0L8 4h2l-1 3 4-4h-2l2-3z" fill="#f0a020"/></svg></button>
          <button aria-label="Атрибуты"><svg width="14" height="14" viewBox="0 0 14 14"><path d="M0 1l4 1 5 8-2 3-5-5zM5 4h8l-4 7" fill="#ddd" stroke="#444"/><path d="M13 0L7 8" stroke="#d08020" stroke-width="2"/></svg><svg width="5" height="3"><use href="#caret"/></svg></button>
        </div>
      </div>
      <button class="panel-title">Блок<svg width="7" height="5"><use href="#caret"/></svg></button>
    </div>

    <div class="panel p-props">
      <div class="panel-body">
        <button class="big"><svg width="30" height="30" viewBox="0 0 30 30"><path d="M4.500 3.500h17v24h-17z" fill="#fff" stroke="#3c5068"/><path d="M7 5h7v10H7z" fill="#2f67a8"/><path d="M15 5h5v10h-5z" fill="#9fb8d4"/><path d="M7 19h9M9 17v4M7 24h6" stroke="#222"/><path d="M28 16l-6 4 2 2z" fill="#8a6a48"/><path d="M22 20c-4 0-5 3-5 5l-2 2c4 2 10 0 10-5z" fill="#c0692c" stroke="#6b3a14"/></svg>Копирование<br>свойств</button>
        <div class="property-grid">
          <svg width="14" height="14" viewBox="0 0 14 14"><path d="M7 7L7 0A7 7 0 0 1 13 3.500z" fill="#f6d52c"/><path d="M7 7l6-3.500a7 7 0 0 1 0 7z" fill="#f08a24"/><path d="M7 7l6 3.500A7 7 0 0 1 7 14z" fill="#d93a3a"/><path d="M7 7v7a7 7 0 0 1-6-3.500z" fill="#3a5fd0"/><path d="M7 7l-6 3.500a7 7 0 0 1 0-7z" fill="#7c4bc0"/><path d="M7 7L1 3.500A7 7 0 0 1 7 0z" fill="#4db04d"/></svg>
          <div class="combo first"><i class="swatch"></i><select aria-label="Цвет"><option>ПоСлою</option></select><svg width="6" height="4"><use href="#caret"/></svg></div>
          <svg width="14" height="14" viewBox="0 0 14 14"><path d="M0 1.500h14" stroke="#111"/><path d="M0 5h14" stroke="#111" stroke-width="2"/><path d="M0 8.500h14M0 12.500h14" stroke="#111" stroke-width="2"/></svg>
          <div class="combo"><i class="line"></i><select aria-label="Вес линий"><option>ПоСлою</option></select><svg width="6" height="4"><use href="#caret"/></svg></div>
          <svg width="14" height="14" viewBox="0 0 14 14"><path d="M0 2h14M0 5h14" stroke="#444" stroke-dasharray="2 1"/><path d="M0 8h14M0 12h14" stroke="#444" stroke-dasharray="4 1"/></svg>
          <div class="combo"><i class="line"></i><select aria-label="Тип линий"><option>ПоСл...</option></select><svg width="6" height="4"><use href="#caret"/></svg></div>
        </div>
      </div>
      <button class="panel-title">Свойства<svg width="7" height="5"><use href="#caret"/></svg><svg class="launcher" width="6" height="6"><use href="#launch"/></svg></button>
    </div>

    <div class="panel p-groups">
      <div class="panel-body">
        <button class="big"><svg width="30" height="30" viewBox="0 0 30 30"><path d="M4.500 3.500h14v24h-14z" fill="none" stroke="#222" stroke-dasharray="2 1"/><path d="M7 6h8v8H7z" fill="#f4e28a" stroke="#555"/><circle cx="12" cy="21" r="4.500" fill="#e6eaef" stroke="#444"/><path d="M22 4v16M14 12h16M17 7l10 10M27 7L17 17" stroke="#69b3e7" stroke-width="1.300"/></svg>Группа</button>
        <div class="rows">
          <button aria-label="Разгруппировать"><svg width="14" height="14" viewBox="0 0 14 14"><path d="M1.500 1.500h7v11h-7z" fill="none" stroke="#333" stroke-dasharray="1 1"/><path d="M3 3h3v3H3z" fill="#f0d060" stroke="#333"/><circle cx="5" cy="10" r="1.700" fill="none" stroke="#333"/><path d="M13 1L9 6" stroke="#f0a020" stroke-width="2"/><path d="M9 6L7 8" stroke="#c22" stroke-width="2"/></svg></button>
          <button aria-label="Редактировать группу"><svg width="14" height="14" viewBox="0 0 14 14"><path d="M1.500 1.500h6v11h-6z" fill="none" stroke="#333" stroke-dasharray="1 1"/><path d="M3 3h3v3H3z" fill="#fff" stroke="#333"/><circle cx="4.500" cy="9.500" r="2" fill="#cfe4f8" stroke="#2f7bd0"/><path d="M9 4h4M11 2v4M9 10h4" stroke="#333"/></svg></button>
          <button class="pressed" aria-label="Выбор группы" aria-pressed="true"><svg width="14" height="14" viewBox="0 0 14 14"><path d="M1.500 1.500h6v11h-6z" fill="none" stroke="#222" stroke-dasharray="1 1"/><path d="M3 3h3v3H3z" fill="#f0d060" stroke="#222"/><circle cx="4.500" cy="9.500" r="1.700" fill="#fff" stroke="#222"/><path d="M8 3l5 6-2 .5 1.500 3-1.500.5-1.500-3L8 12z" fill="#f8e88a" stroke="#333"/></svg></button>
        </div>
      </div>
      <button class="panel-title">Группы<svg width="7" height="5"><use href="#caret"/></svg></button>
    </div>

    <div class="panel p-utils">
      <div class="panel-body">
        <button class="big"><svg width="30" height="30" viewBox="0 0 30 30"><path d="M2.500 8v8M27.500 8v8M3 12h24M6 10l-3 2 3 2M24 10l3 2-3 2" fill="none" stroke="#333"/><path d="M2.500 19.500h25v4h-25z" fill="#f3b93a" stroke="#a06c10"/><path d="M6 20v2M10 20v2M14 20v2M18 20v2M22 20v2" stroke="#704a08"/></svg>Измерить<svg class="drop" width="5" height="3"><use href="#caret"/></svg></button>
        <div class="rows">
          <button aria-label="Быстрый выбор"><svg width="14" height="14"><use href="#quick"/></svg></button>
          <button aria-label="Точка"><svg width="12" height="12"><use href="#point"/></svg></button>
          <button aria-label="Калькулятор"><svg width="10" height="13" viewBox="0 0 10 13"><path d="M.5.500h9v12h-9z" fill="#fff" stroke="#333"/><path d="M2 3h6" stroke="#333"/><path d="M2 6h6M2 8h6M2 10h6" stroke="#333" stroke-dasharray="1 1"/></svg></button>
        </div>
      </div>
      <button class="panel-title">Утилиты<svg width="7" height="5"><use href="#caret"/></svg></button>
    </div>

    <div class="panel p-clip">
      <div class="panel-body">
        <button class="big"><svg width="30" height="30" viewBox="0 0 30 30"><path d="M5 4h18v23H5z" fill="#9a8468" stroke="#5a4a38"/><path d="M8 7h12v18H8z" fill="#d8d8d8"/><path d="M9 2h10v4H9z" fill="#bbb" stroke="#666"/><path d="M14.500 11.500h8l5 5v12h-13z" fill="#e9eff8" stroke="#5a7390"/><path d="M22 12v5h5" fill="none" stroke="#5a7390"/></svg>Вставить<svg class="drop" width="5" height="3"><use href="#caret"/></svg></button>
        <div class="rows">
          <button aria-label="Вырезать"><svg width="14" height="14" viewBox="0 0 14 14"><path d="M2 1l9 10M12 1L3 11" stroke="#444" stroke-width="1.400"/><circle cx="2.500" cy="11.500" r="1.800" fill="#fff" stroke="#444"/><circle cx="11.500" cy="11.500" r="1.800" fill="#fff" stroke="#444"/></svg></button>
          <button aria-label="Копировать"><svg width="14" height="14" viewBox="0 0 14 14"><path d="M.5 1.500h7v10h-7z" fill="#ddd" stroke="#555"/><path d="M4.500 2.500h6l3 3v8h-9z" fill="#fff" stroke="#555"/></svg></button>
        </div>
      </div>
      <button class="panel-title">Буфер обмена</button>
    </div>

    <div class="panel p-view">
      <div class="panel-body">
        <button class="big"><svg width="30" height="30" viewBox="0 0 30 30"><path d="M4.500 7.500h9v5h12v10h-21z" fill="#eef2f7" stroke="#555" stroke-width="1.300"/></svg>Базовый<svg class="drop" width="5" height="3"><use href="#caret"/></svg></button>
      </div>
      <button class="panel-title">Вид<svg width="7" height="5"><use href="#caret"/></svg><svg class="launcher" width="6" height="6"><use href="#launch"/></svg></button>
    </div>
  </section>

  <nav class="file-tabs" aria-label="Файлы">
    <button class="tab t-start">Начало</button>
    <button class="tab t-doc">Чертеж1*<svg width="7" height="7" viewBox="0 0 7 7"><path d="M0 0l7 7M7 0L0 7" stroke="#888" stroke-width="1.500"/></svg></button>
    <button class="tab t-plan active">План +0.000, +3.700, +7.400<svg width="7" height="7" viewBox="0 0 7 7"><path d="M0 0l7 7M7 0L0 7" stroke="#999" stroke-width="1.500"/></svg></button>
    <button class="add" aria-label="Новый чертеж"><svg width="8" height="8" viewBox="0 0 8 8"><path d="M4 0v8M0 4h8" stroke="#333" stroke-width="2"/></svg></button>
  </nav>

  <div class="toolbar-row">
    <div class="toolbar" role="toolbar" aria-label="Водоснабжение">
      <i class="grip"></i>
      <button aria-label="Менеджер"><svg class="tico"><use href="#manager"/></svg></button>
      <button aria-label="Настройки"><svg class="tico"><use href="#settings"/></svg></button>
      <button aria-label="Обновление"><svg class="tico"><use href="#refresh"/></svg></button>
      <button aria-label="Расчеты"><svg class="tico"><use href="#calc"/></svg></button>
      <i class="sep"></i>
      <button aria-label="База данных"><svg class="tico"><use href="#db"/></svg></button>
      <button aria-label="Импорт"><svg class="tico"><use href="#dbx"/></svg></button>
      <i class="sep"></i>
      <button aria-label="Модель здания"><svg class="tico"><use href="#build"/></svg></button>
      <button aria-label="Мастер соединений"><svg class="tico"><use href="#wizard"/></svg></button>
      <button aria-label="Этаж"><svg class="tico"><use href="#floor"/></svg></button>
      <button aria-label="Помещение"><svg class="tico"><use href="#room"/></svg></button>
      <button aria-label="Определить помещение"><svg class="tico"><use href="#auto"/></svg></button>
      <button aria-label="Маркер"><svg class="tico"><use href="#marker"/></svg></button>
      <i class="sep"></i>
      <button aria-label="2D/3D"><svg class="tico"><use href="#mode3d"/></svg></button>
      <i class="sep"></i>
      <button aria-label="База УГО"><svg class="tico"><use href="#ugo"/></svg></button>
      <button aria-label="Трубопровод"><svg class="tico"><use href="#pipe"/></svg></button>
      <button aria-label="Трасса"><svg class="tico"><use href="#trace"/></svg></button>
      <button aria-label="Перепад"><svg class="tico"><use href="#drop"/></svg></button>
      <button aria-label="Существующие трассы"><svg class="tico"><use href="#exist"/></svg></button>
      <button aria-label="Фитинг"><svg class="tico"><use href="#fitting"/></svg></button>
      <button aria-label="Соединительные элементы"><svg class="tico"><use href="#connect"/></svg></button>
      <i class="sep"></i>
      <button aria-label="Рамка"><svg class="tico"><use href="#frame"/></svg></button>
      <button aria-label="Специальная выноска"><svg class="tico"><use href="#callout"/></svg></button>
      <button aria-label="Текст"><svg class="tico"><use href="#textel"/></svg></button>
      <button aria-label="Уровень"><svg class="tico"><use href="#level"/></svg></button>
      <button aria-label="Уклон"><svg class="tico"><use href="#slope"/></svg></button>
      <i class="sep"></i>
      <button aria-label="Модель"><svg class="tico"><use href="#cube"/></svg></button>
      <button aria-label="Аксонометрия"><svg class="tico"><use href="#axo"/></svg></button>
      <button aria-label="Вид объекта"><svg class="tico"><use href="#objaxo"/></svg></button>
      <button aria-label="Подсеть"><svg class="tico"><use href="#subnet"/></svg></button>
      <i class="sep"></i>
      <button aria-label="Свойства"><svg class="tico"><use href="#props"/></svg></button>
      <button aria-label="Проверка"><svg class="tico"><use href="#check"/></svg></button>
    </div>
    <div class="toolbar stub"><i class="grip"></i></div>
  </div>

  <main class="workspace">
    <aside class="properties">
      <h2><i class="grip light"></i>СВОЙСТВА</h2>
      <div class="selection">
        <div class="picker"><select aria-label="Выбранные объекты"><option>Ничего не выбрано</option></select><span><svg width="5" height="3"><use href="#caret"/></svg></span></div>
        <button aria-label="Добавить в набор"><svg width="14" height="14" viewBox="0 0 14 14"><path d="M1.500 3.500h7v7h-7z" fill="#9dbde8" stroke="#35507a"/><path d="M4.500 5.500h7v7h-7z" fill="#c6daf5" stroke="#35507a"/><path d="M10 0v7M6.500 3.500h7" stroke="#17a81a" stroke-width="2.500"/></svg></button>
        <button aria-label="Выбрать объекты"><svg width="12" height="12"><use href="#point"/></svg></button>
        <button aria-label="Быстрый выбор"><svg width="14" height="14"><use href="#quick"/></svg></button>
      </div>
      <section class="group">
        <button class="group-head">Общие<b>−</b></button>
        <table>
          <tr><th>Цвет</th><td><i class="dot"></i>ПоСлою</td></tr>
          <tr><th>Слой</th><td>0</td></tr>
          <tr><th>Тип линий</th><td><i class="rule"></i>ПоСлою</td></tr>
          <tr><th>Масштаб типа линий</th><td>100.0000</td></tr>
          <tr><th>Вес линий</th><td><i class="rule"></i>ПоСлою</td></tr>
          <tr><th>Прозрачность</th><td>ПоСлою</td></tr>
          <tr><th>Высота</th><td>0.0000</td></tr>
        </table>
      </section>
      <section class="group">
        <button class="group-head">3D-визуализация<b>−</b></button>
        <table>
          <tr><th>Материал</th><td>ПоСлою</td></tr>
          <tr><th>Отображение тени</th><td>Отбрасываемая и прини...</td></tr>
        </table>
      </section>
      <section class="group">
        <button class="group-head">Стиль печати<b>−</b></button>
        <table>
          <tr><th>Стиль печати</th><td class="off">ПоЦвету</td></tr>
          <tr><th>Таблица стилей печ...</th><td>Нет</td></tr>
          <tr><th>Пространство табли...</th><td class="off">Модель</td></tr>
          <tr><th>Тип стилей печати</th><td class="off">Недоступно</td></tr>
        </table>
      </section>
      <section class="group">
        <button class="group-head">Вид<b>−</b></button>
        <table>
          <tr><th>Центр X</th><td class="off">48477.2813</td></tr>
          <tr><th>Центр Y</th><td class="off">4135.5253</td></tr>
          <tr><th>Центр Z</th><td class="off">0.0000</td></tr>
          <tr><th>Высота</th><td class="off">22919.1362</td></tr>
          <tr><th>Ширина</th><td class="off">46433.5745</td></tr>
        </table>
      </section>
      <section class="group">
        <button class="group-head">Разное<b>−</b></button>
        <table>
          <tr><th>Масштаб аннотаций</th><td>1:1</td></tr>
          <tr><th>Знак ПСК ВКЛ</th><td>Да</td></tr>
          <tr><th>Знак ПСК в нач. коо...</th><td>Да</td></tr>
          <tr><th>ПСК в каждом Вэкр...</th><td>Да</td></tr>
          <tr><th>Имя ПСК</th><td class="off">*ВЕРХНЯЯ*</td></tr>
          <tr><th>Визуальный стиль</th><td>2D-каркас</td></tr>
        </table>
      </section>
    </aside>

    <div class="canvas">
      <svg class="drawing" aria-label="План этажа">
        <g transform="translate(-286 -189)" fill="none">
          <path d="M286 683.500H982.500V189" stroke="#b8b8b8"/>
          <path d="M286 815.500H1060.500V189" stroke="#f592c4"/>
          <g stroke="#8f8585">
            <path d="M286 200.500H414M427 200.500H584M596 200.500H948M286 636.500H414M427 636.500H584M596 636.500H948"/>
            <path d="M286 649.500H948V630M948.500 189V200"/>
          </g>
          <g stroke="#777">
            <path d="M286 191.500h42.500M328.500 189v5M339.500 200V189M339.500 191.500h71M410.500 189V200M427.500 200V189M427.500 191.500h71M498.500 189V200M509.500 200V189M509.500 191.500h71M580.500 189V200M596.500 200V189M596.500 191.500H670M286 194.500h42M339.500 194.500h71M427.500 194.500h71M509.500 194.500h71M596.500 194.500H660"/>
            <path d="M286 638.500h42.500v12M339.500 650V636.500M410.500 650V636.500M427.500 650V636.500M498.500 650V636.500M509.500 650V636.500M580.500 650V636.500M596.500 650V636.500"/>
          </g>
          <path d="M286 644.500h42M340 644.500h70M428 644.500h70M510 644.500h70M597 644.500h60" stroke="#777" stroke-width="3"/>
          <path d="M286 644.500h42M340 644.500h70M428 644.500h70M510 644.500h70M597 644.500h60" stroke="#ddd" stroke-dasharray="3 19"/>
          <path d="M286 651.500h42M340 651.500h70M428 651.500h70M510 651.500h70M597 651.500h60" stroke="#bbb"/>
          <path d="M947.500 395h2v45h-2zM947.500 636v14" stroke="#999"/>
          <g stroke="#6e6468">
            <path d="M417.500 212V371M423.500 212V371M417.500 467V584M423.500 467V584M417.500 614V624M423.500 614V624M586.500 467V624M592.500 467V624M332.500 461V636M338.500 461V636"/>
            <path d="M286 381.500H414M286 455.500H670M286 460.500H670"/>
          </g>
          <path d="M426 381.500H583M597 381.500H670M291 455.500h27M446 455.500h27M609 455.500h27M291 381.500h27M417.500 584v30M423.500 584v30" stroke="#fa7fbe"/>
          <g stroke="#666">
            <path d="M291.500 381V351A26 26 0 0 1 317.500 376.500V381M291.500 455V485.500A26 26 0 0 0 317.500 460V455M446.500 455V485.500A26 26 0 0 0 472.500 460V455M609.500 455V485.500A26 26 0 0 0 635.500 460V455M419 586.500H392A26 26 0 0 0 418 612"/>
            <path d="M294 378h9M306 378h9M449 458.500h9M461 458.500h9M612 458.500h9M624 458.500h9M294 461l17 13M419.500 588v22" stroke-dasharray="8 2"/>
          </g>
          <g stroke="#7f9bb8">
            <path d="M286 206.500H1014M286 291.500H1014M286 545.500H1014M286 630.500H1014" stroke-dasharray="57 5 3 4"/>
            <path d="M286 376.500H1014M670 461.500H1014"/>
            <path d="M419.500 189V742M589.500 189V742" stroke-dasharray="57 5 3 4"/>
            <path d="M419.500 676V742M589.500 676V742"/>
            <circle cx="420" cy="757" r="14.500"/><circle cx="590" cy="757" r="14.500"/><circle cx="759" cy="757" r="14.500"/><circle cx="928" cy="757" r="14.500"/>
          </g>
          <g fill="#fff" fill-opacity=".4" stroke="#8a7478">
            <path d="M414.500 200.500h12v12h-12zM583.500 200.500h12v12h-12zM414.500 370.500h12v12h-12zM583.500 370.500h12v12h-12zM414.500 455.500h12v12h-12zM583.500 455.500h12v12h-12zM414.500 624.500h12v12h-12zM583.500 624.500h12v12h-12z"/>
            <path d="M417.500 203.500h6v6h-6zM586.500 203.500h6v6h-6zM417.500 373.500h6v6h-6zM586.500 373.500h6v6h-6zM417.500 458.500h6v6h-6zM586.500 458.500h6v6h-6zM417.500 627.500h6v6h-6zM586.500 627.500h6v6h-6z" stroke="#b9ad8c"/>
          </g>
          <g stroke="#fa6fb6"><circle cx="335" cy="288" r="4.500"/><circle cx="588" cy="288" r="4.500"/><circle cx="507" cy="418" r="4.500"/><circle cx="293" cy="548" r="4.500"/><circle cx="377.500" cy="548" r="4.500"/><circle cx="504.500" cy="548" r="4.500"/><circle cx="631.500" cy="548" r="4.500"/></g>
          <g class="room-no"><text x="335" y="290">104</text><text x="588" y="290">113</text><text x="507" y="420">300</text><text x="293" y="550">111</text><text x="378" y="550">110</text><text x="505" y="550">109</text><text x="632" y="550">108</text></g>
          <path d="M589 452h8M598.500 446v8M595 446.500h7" stroke="#0ff" stroke-width="1.500"/><circle cx="598" cy="453" r="2.500" fill="#0ff"/>
          <g class="axis-no"><text x="420" y="762">6</text><text x="590" y="762">7</text><text x="759" y="762">8</text><text x="928" y="762">9</text></g>
          <path d="M302.500 779V820.500H345M298.500 816.500h8v8h-8zM304 764l5 5 5-5M309 769v6M348 809l11 11M359 809l-11 11" stroke="#222"/>
        </g>
      </svg>
      <button class="view-label">[−][Сверху][2D-каркас]</button>

      <div class="viewcube">
        <svg width="106" height="106" viewBox="0 0 106 106" fill="none">
          <circle cx="53" cy="53" r="46" stroke="#fbfbfb" stroke-width="10"/><circle cx="53" cy="53" r="51" stroke="#f5f5f5"/><circle cx="53" cy="53" r="40" stroke="#f5f5f5"/>
          <path d="M31.500 31.500h43v43h-43z" fill="#ececec" stroke="#8f8f8f"/><path d="M40 40h27v27H40z" fill="#e1e3e6"/>
          <g class="compass"><text x="53" y="13">С</text><text x="6" y="60">З</text><text x="100" y="60">В</text><text x="53" y="108">Ю</text></g>
          <text class="face" x="53" y="57">Верх</text>
        </svg>
        <button>Без имени<svg width="8" height="5" viewBox="0 0 8 5"><path d="M.5.500h7L4 4.500z" fill="none" stroke="#aaa"/></svg></button>
      </div>

      <div class="navbar" role="toolbar" aria-label="Навигация">
        <svg width="27" height="178" viewBox="0 0 27 178" fill="none" stroke="#cfcfcf">
          <circle cx="22" cy="5" r="3"/><path d="M20.500 3.500l3 3M23.500 3.500l-3 3"/>
          <path d="M14 17h9v9a9 9 0 1 1-9-9z"/><circle cx="14" cy="26" r="5"/><path d="M12 43h4l-2 2z" fill="#bbb"/>
          <path d="M3 48.500h21M3 139.500h21" stroke="#bbb"/>
          <path d="M9 70c-2-4-5-7-5-8 1-2 3 0 5 2l-2-9c1-2 2-1 3 1l1 5V53c1-2 2-2 3 0v8l2-8c1-1 2-1 2 1l-1 8 3-5c1-1 2 0 2 1l-4 12z"/>
          <path d="M5 77l13 13M18 77L5 90M5 81v-4h4M14 77h4v4M5 86v4h4"/><circle cx="18" cy="89" r="4.500" fill="#f6f6f6"/><path d="M21 92l4 4" stroke-width="2"/><path d="M12 102h4l-2 2z" fill="#bbb"/>
          <ellipse cx="14" cy="119" rx="9" ry="3.500"/><path d="M12.500 126v-13h-2l3.500-4 3.500 4h-2v13z" fill="#f4f4f4"/><path d="M12 134h4l-2 2z" fill="#bbb"/>
          <path d="M4.500 143.500h5v6h-5zM11.500 143.500h5v6h-5zM18.500 143.500h5v6h-5zM4.500 151.500h14v11h-14z"/><path d="M9 153.500v7l5-3.500z" fill="#ccc"/>
          <circle cx="22" cy="174" r="3"/><path d="M20.500 174h3"/>
        </svg>
      </div>

      <div class="command">
        <div class="command-tools">
          <i class="grip white"></i>
          <button aria-label="Закрыть"><svg width="8" height="8" viewBox="0 0 8 8"><path d="M0 0l8 8M8 0L0 8" stroke="#fff" stroke-width="2"/></svg></button>
          <button aria-label="Настройка"><svg width="12" height="12" viewBox="0 0 12 12"><path d="M1 1.500L3.500 4l1-1L2.500.5a3.300 3.300 0 0 1 4 4.500L11.500 10 10 11.500 5 6.500A3.300 3.300 0 0 1 .5 2.500z" fill="#fff"/></svg></button>
        </div>
        <button class="prompt" aria-label="Последние команды"><svg width="13" height="12" viewBox="0 0 13 12"><path d="M.5.500h12v11H.5z" fill="#e6eaf0" stroke="#b8bfc8"/><path d="M3 3l3 3-3 3M7 9h4" fill="none" stroke="#555"/></svg><svg width="5" height="3"><use href="#caret"/></svg></button>
        <input type="text" aria-label="Команда" placeholder="Введите команду">
        <button class="history" aria-label="История команд"><svg width="6" height="4" viewBox="0 0 6 4"><path d="M0 4h6L3 0z" fill="#555"/></svg></button>
      </div>
    </div>
  </main>

  <footer class="bottom">
    <nav class="layout-tabs" aria-label="Листы">
      <button class="active">Модель</button><button>A4</button><button>A3</button><button>A2</button><button>A1</button><button>A0</button>
      <button class="plus" aria-label="Новый лист"><svg width="8" height="8" viewBox="0 0 8 8"><path d="M4 0v8M0 4h8" stroke="#444" stroke-width="2"/></svg></button>
    </nav>
    <div class="status">
      <button class="wide">МОДЕЛЬ</button>
      <button aria-label="Сетка"><svg width="12" height="12" viewBox="0 0 12 12"><path d="M2 0v12M5 0v12M8 0v12M11 0v12M0 2h12M0 5h12M0 8h12M0 11h12" stroke="#555"/></svg></button>
      <button aria-label="Шаг"><svg width="12" height="12" viewBox="0 0 12 12"><path d="M0 1h12M0 4h12M0 7h12M0 10h12" stroke="#777" stroke-dasharray="1 2"/></svg></button>
      <button class="arrow" aria-label="Параметры шага"><svg width="6" height="4"><use href="#caret"/></svg></button>
      <button class="man" aria-label="Орто"><svg width="12" height="12" viewBox="0 0 12 12"><path d="M1.500 0v10.500H12M1.500 6.500h4v4" fill="none" stroke="#555" stroke-width="1.300"/></svg></button>
      <button aria-label="Полярное отслеживание"><svg width="13" height="12" viewBox="0 0 13 12"><circle cx="6" cy="6" r="5" fill="none" stroke="#2090ff" stroke-width="1.400"/><path d="M6 6h7M6 6l4-4" stroke="#2090ff" stroke-width="1.300"/></svg></button>
      <button class="arrow" aria-label="Углы"><svg width="6" height="4"><use href="#caret"/></svg></button>
      <button aria-label="Изоплоскость"><svg width="14" height="14" viewBox="0 0 14 14"><path d="M1 1l12 12M6.500 0v5M7 9v5" stroke="#555" stroke-width="1.200"/></svg></button>
      <button class="arrow" aria-label="Плоскости"><svg width="6" height="4"><use href="#caret"/></svg></button>
      <button aria-label="Отслеживание"><svg width="14" height="12" viewBox="0 0 14 12"><path d="M13 0L1 11h12" fill="none" stroke="#2090ff" stroke-width="1.400"/><path d="M6 4h3v3H6z" fill="#2090ff"/></svg></button>
      <button aria-label="Привязка"><svg width="14" height="13" viewBox="0 0 14 13"><path d="M2.500 3.500h10v9h-10z" fill="none" stroke="#2090ff" stroke-width="1.400"/><path d="M.5.500h4v4h-4z" fill="#2ecc40" stroke="#111"/></svg></button>
      <button class="arrow" aria-label="Виды привязок"><svg width="6" height="4"><use href="#caret"/></svg></button>
      <button class="man" aria-label="Аннотативность"><svg width="14" height="14" viewBox="0 0 14 14"><path d="M6 0l1.500 6 4.500 7-5-4-5 4 3-6z" fill="#2090ff" stroke="#2090ff"/><circle cx="10.500" cy="3.500" r="2" fill="#e6f2ff" stroke="#2090ff"/></svg></button>
      <button class="man" aria-label="Автомасштаб"><svg width="14" height="14" viewBox="0 0 14 14"><path d="M6 0l1.500 6 4.500 7-5-4-5 4 3-6z" fill="#555" stroke="#555"/><path d="M12 0L9.500 3.500h3L10.500 7" fill="none" stroke="#555"/></svg></button>
      <button class="man" aria-label="Масштаб"><svg width="12" height="14" viewBox="0 0 12 14"><path d="M6 0l2 7 4 6-6-3-6 3 4-6z" fill="#555"/></svg></button>
      <button class="scale">1:1<svg width="6" height="4"><use href="#caret"/></svg></button>
      <button class="gear" aria-label="Рабочее пространство"><svg width="12" height="12" viewBox="0 0 12 12"><circle cx="6" cy="6" r="3" fill="none" stroke="#555" stroke-width="2.400"/><path d="M6 0v2M6 10v2M0 6h2M10 6h2M2 2l1 1M9 9l1 1M10 2L9 3M3 9l-1 1" stroke="#555" stroke-width="2"/></svg></button>
      <button class="arrow" aria-label="Пространства"><svg width="6" height="4"><use href="#caret"/></svg></button>
      <button aria-label="Монитор аннотаций"><svg width="12" height="12" viewBox="0 0 12 12"><path d="M6 0v12M0 6h12" stroke="#444" stroke-width="1.600"/></svg></button>
      <button class="man" aria-label="Изоляция"><svg width="13" height="13" viewBox="0 0 13 13"><path d="M.5.500h4v5h-4zM5 12.500L7.500 8l2.500 4.500z" fill="none" stroke="#555"/><circle cx="10" cy="4.500" r="2.500" fill="none" stroke="#555"/></svg></button>
      <button class="man" aria-label="Производительность"><svg width="14" height="14" viewBox="0 0 14 14"><circle cx="7" cy="7" r="6.500" fill="#1569c7"/><path d="M4 10l5-5" stroke="#4da0f0"/></svg></button>
      <button aria-label="Уведомления"><svg width="14" height="14" viewBox="0 0 14 14"><path d="M1 0h7l3 3v9H1z" fill="#2f5f95"/><path d="M2 3h6M2 6h5M2 9h4" stroke="#dfeeff"/><path d="M9 5l4.500 8.500h-9z" fill="#ffd400" stroke="#a07800" stroke-width=".7"/><path d="M9 8v3M9 12v1" stroke="#222"/></svg></button>
      <button aria-label="Сохраненные виды"><svg width="13" height="12" viewBox="0 0 13 12"><path d="M1 3h4V1h4v3h3v7H1z" fill="#fff" stroke="#e0452f" stroke-width="1.600"/><path d="M6 5v4M9 5v4" stroke="#e0452f"/></svg></button>
      <button class="man" aria-label="Полный экран"><svg width="14" height="11" viewBox="0 0 14 11"><path d="M.7.700h12.600v9.600H.7z" fill="none" stroke="#444" stroke-width="1.300"/><path d="M8 3h3v2zM6 8H3V6z" fill="#444" stroke="#444"/></svg></button>
      <button class="man" aria-label="Адаптация"><svg width="13" height="12" viewBox="0 0 13 12"><path d="M0 1h13M0 6h13M0 11h13" stroke="#333" stroke-width="1.600"/></svg></button>
    </div>
  </footer>
</div>
</body>
</html>
```

FILE: styles.css
```css
* { box-sizing: border-box; }

body {
  margin: 0;
  font: 10px/14px "Open Sans", "Noto Sans", sans-serif;
  color: #111;
  overflow: hidden;
}

button, input, select {
  font: inherit;
  color: inherit;
  margin: 0;
  padding: 0;
  border: 0;
  background: none;
  border-radius: 0;
  white-space: nowrap;
}

select { appearance: none; outline: 0; }
input { outline: 0; }
svg { display: block; flex: none; }
.defs { position: absolute; width: 0; height: 0; }

.app {
  display: flex;
  flex-direction: column;
  height: 100vh;
  border-left: 1px solid #2b5b6e;
  border-right: 3px solid #10707f;
  background: #f0f0f0;
}

/* Header */
.header { position: relative; flex: none; z-index: 5; }

.app-button {
  position: absolute;
  left: 1px;
  top: 3px;
  width: 33px;
  height: 34px;
  display: flex;
  align-items: center;
  justify-content: center;
  gap: 2px;
  border: 1px solid #444;
  background: linear-gradient(#8f8f8f, #6c6c6c);
  color: #222;
}

.titlebar {
  display: flex;
  align-items: flex-start;
  height: 23px;
  padding: 3px 0 0 35px;
  background: #fff;
}

.quick-access {
  display: flex;
  width: 179px;
  height: 19px;
  padding: 0 2px 0 3px;
  border: 1px solid #aaa;
  background: linear-gradient(#f4f4f4, #d6d6d6);
}

.quick-access button { flex: 1 1 20px; display: flex; align-items: center; justify-content: center; }
.quick-access .slim { flex: 1 1 9px; }

.title {
  flex: 1;
  display: flex;
  gap: 14px;
  justify-content: center;
  margin: 0;
  font-size: 10px;
  line-height: 13px;
  font-weight: normal;
  color: #000;
}

.infocenter {
  display: flex;
  align-items: stretch;
  width: 374px;
  height: 19px;
  border: 1px solid #999;
  background: linear-gradient(#f4f4f4, #d2d2d2);
}

.infocenter button { flex: 1 1 20px; display: flex; align-items: center; justify-content: center; gap: 6px; }
.infocenter .expand { flex: 0 0 11px; }
.infocenter .search { flex: 0 0 151px; min-width: 0; padding: 0 1px; border: 1px solid #111; background: #fff; font-style: italic; }
.search::placeholder { color: #666; opacity: 1; }
.infocenter .sign-in { flex: 0 0 98px; gap: 4px; }
.infocenter .help { border-left: 1px solid #aaa; flex-basis: 28px; }

.window-controls { display: flex; width: 136px; padding-left: 22px; }
.window-controls button { flex: 1; height: 10px; display: flex; justify-content: center; }

.menubar {
  display: flex;
  align-items: stretch;
  height: 18px;
  padding-left: 37px;
  border-top: 1px solid #555;
  background: linear-gradient(#6a6a6a, #949494);
  color: #fff;
}

.menubar > button, .menu-open > button { height: 17px; padding: 0 9px 2px; line-height: 15px; }
.menubar > .last { padding-right: 3px; }
.menu-open { position: relative; color: #111; }
.menu-open > button { background: linear-gradient(#333, #4a4a4a); color: #fff; padding: 0 5px 2px; }
.doc-controls { margin-left: auto; display: flex; gap: 4px; padding-right: 4px; }
.doc-controls button { display: flex; align-items: center; }

/* Open menu */
.dropdown {
  position: absolute;
  left: 0;
  top: 17px;
  width: 291px;
  height: 705px;
  margin: 0;
  padding: 1px 3px 1px 4px;
  list-style: none;
  display: flex;
  flex-direction: column;
  border: 1px solid #b4b4b4;
  background: #f1f1f1;
  box-shadow: 3px 3px 2px rgba(0, 0, 0, .5);
}

.dropdown li { flex: 1 1 0; display: flex; min-height: 0; }
.dropdown li.divider { flex: 0 0 6px; margin-left: 20px; background: linear-gradient(#cfcfcf, #cfcfcf) 0 2px / 100% 1px no-repeat; }
.dropdown button { flex: 1; display: flex; align-items: center; text-align: left; color: #000; }
.dropdown .ico { flex: none; width: 14px; height: 14px; margin-right: 10px; }
.dropdown kbd { margin-left: auto; margin-right: 14px; font: inherit; }
.dropdown .sub { margin-left: auto; margin-right: 9px; }

/* Ribbon */
.ribbon-tabs {
  flex: none;
  display: flex;
  height: 16px;
  padding: 1px 0 0 3px;
  background: #9e9e9e;
  overflow: hidden;
  color: #222;
}

.ribbon-tabs button { padding: 0 7px; line-height: 15px; }
.ribbon-tabs .active { background: #f4f4f4; padding: 0 8px; }

.ribbon {
  flex: none;
  display: flex;
  height: 84px;
  padding-right: 14px;
  background: linear-gradient(90deg, #d8d8d8, #a0a0a0) right / 14px 100% no-repeat #f0f0f0;
  color: #444;
}

.panel {
  flex: none;
  display: flex;
  flex-direction: column;
  border-right: 2px solid #c4c4c4;
  border-bottom: 2px solid #fafafa;
  padding-left: 1px;
  overflow: hidden;
  background: #fff;
}

.panel-body { flex: 1; display: flex; padding: 4px 0 0; }

.panel-title {
  position: relative;
  flex: none;
  height: 15px;
  display: flex;
  align-items: center;
  justify-content: center;
  gap: 6px;
  background: #ececec;
}

.launcher { position: absolute; right: 3px; top: 5px; }

.big {
  display: flex;
  flex-direction: column;
  align-items: center;
  line-height: 13px;
}

.big > svg:first-child { margin-bottom: 2px; }
.big .drop { margin-top: 2px; }
.rows { display: flex; flex-direction: column; }
.rows button { height: 20px; display: flex; align-items: center; gap: 4px; }
.rows .gap { margin-left: 5px; }

.p-draw { width: 221px; }
.p-draw .big:nth-child(1) { width: 48px; }
.p-draw .big:nth-child(2) { width: 57px; }
.p-draw .big:nth-child(3) { width: 40px; }
.p-draw .big:nth-child(4) { width: 38px; }
.p-draw .rows { padding-left: 3px; }

.p-edit { width: 336px; }
.p-edit .rows { width: 84px; padding-left: 5px; }
.p-edit .rows:nth-child(2) { width: 126px; }
.p-edit .rows:nth-child(3) { width: 101px; padding-left: 0; }
.p-edit .rows:nth-child(4) { width: 20px; padding-left: 0; }

.p-anno { width: 132px; }
.p-anno .big:nth-child(1) { width: 44px; }
.p-anno .big:nth-child(2) { width: 38px; }
.p-anno .rows { padding-left: 3px; }

.p-layers { flex: 1 1 0; }
.p-layers .rows { margin-left: auto; width: 135px; }
.p-layers .rows .combo { width: 78px; }

.p-block { width: 73px; }
.p-block .big { width: 38px; }
.p-block .rows { padding-left: 2px; }

.p-props { width: 204px; }
.p-props .big { width: 68px; }
.property-grid { flex: 1; display: grid; grid-template-columns: 14px 1fr; gap: 1px 2px; align-content: start; align-items: center; padding-right: 1px; min-width: 0; }

.combo { display: flex; align-items: center; height: 19px; min-width: 0; padding: 0 2px 0 7px; border: 1px solid #c8c8c8; background: #f7f7f7; color: #111; }
.combo select { flex: 1; min-width: 0; text-overflow: clip; overflow: hidden; }
.combo > svg { margin-left: 6px; }
.swatch { flex: none; width: 13px; height: 13px; margin: 0 8px 0 3px; background: #000; }
.line { flex: none; width: 49px; height: 1px; margin-right: 2px; background: #222; }

.p-groups { width: 63px; }
.p-groups .big { width: 38px; }
.p-groups .rows { width: 20px; }
.rows .pressed { background: #a9cdf3; outline: 1px solid #3b7ec4; outline-offset: -1px; }
.p-groups .rows button { justify-content: center; }

.p-utils { width: 89px; }
.p-utils .big { width: 64px; }
.p-utils .rows button { justify-content: center; width: 18px; }
.p-clip { width: 84px; }
.p-clip .big { width: 58px; }
.p-clip .rows { padding-left: 2px; }
.p-view { width: 57px; }
.p-view .big { width: 54px; }

/* File tabs */
.file-tabs { flex: none; display: flex; align-items: flex-end; height: 21px; padding-left: 13px; background: #b1b1b1; color: #555; }

.tab {
  display: flex;
  align-items: center;
  justify-content: space-between;
  height: 18px;
  padding: 0 14px 0 14px;
  background: #d3d3d3;
  clip-path: polygon(0 100%, 3px 85%, 7px 15%, 11px 0, calc(100% - 11px) 0, calc(100% - 7px) 15%, calc(100% - 3px) 85%, 100% 100%);
}

.t-start { width: 110px; }
.t-doc { width: 103px; padding: 0 10px 0 8px; }
.t-plan { width: 164px; padding: 0 14px 0 8px; }
.tab.active { background: #f2f2f2; color: #000; }
.add { width: 20px; height: 15px; display: grid; place-items: center; background: #dadada; border-radius: 3px 8px 0 8px; }

/* Tool strip */
.toolbar-row { flex: none; display: flex; gap: 3px; height: 27px; padding: 4px 0 3px 7px; background: #f0f0f0; }

.toolbar { display: flex; align-items: center; width: 642px; padding-right: 2px; border: 1px solid #6c6c6c; border-width: 1px 1px 2px; background: #f0f0f0; }
.toolbar button { flex: 1 1 0; display: flex; justify-content: center; }
.tico { width: 14px; height: 14px; }
.toolbar .sep { flex: 0 0 5px; height: 16px; background: linear-gradient(#222, #222) 2px 0 / 1px 100% no-repeat; }
.toolbar.stub { width: 200px; }

.grip {
  flex: none;
  align-self: stretch;
  width: 6px;
  background: repeating-linear-gradient(#8c8c8c 0 1px, #c9c9c9 1px 3px);
}

.grip.light { width: 4px; margin: 3px 3px 3px 4px; background: repeating-linear-gradient(#bbb 0 1px, transparent 1px 3px); }
.grip.white { width: 5px; margin: 3px 0; background: repeating-linear-gradient(#ddd 0 1px, transparent 1px 3px); }

/* Workspace */
.workspace { flex: 1; display: flex; min-height: 0; }

.properties { flex: none; width: 285px; padding: 2px 11px 0 0; background: #f0f0f0; overflow: hidden; }
.properties h2 { display: flex; align-items: center; height: 17px; margin: 0 -10px 10px 1px; background: #e6e6e6; font-size: 10px; line-height: 16px; font-weight: normal; }

.selection { display: flex; align-items: center; gap: 6px; margin-left: 14px; height: 20px; }
.selection > button { width: 14px; display: flex; justify-content: center; }
.picker { flex: 0 0 199px; display: flex; height: 20px; margin-right: 1px; border: 1px solid #8a8a8a; background: #fff; }
.picker select { flex: 1; padding-left: 3px; min-width: 0; }
.picker span { width: 12px; display: grid; place-items: center; border-left: 1px solid #8a8a8a; color: #666; }

.group { margin: 2px 0 0 14px; }
.group-head { display: flex; justify-content: space-between; align-items: center; width: 100%; height: 17px; padding: 0 5px; border: 1px solid #999; background: #dcdcdc; font-weight: bold; }
.group table { width: calc(100% - 15px); margin-left: 15px; border-collapse: collapse; table-layout: fixed; }
.group tr { height: 16px; }
.group th, .group td { padding: 0 0 0 4px; border: 1px solid #e0e0e0; border-top: 0; font-weight: normal; line-height: 15px; text-align: left; white-space: nowrap; overflow: hidden; color: #111; }
.group th { width: 111px; }
.group td { padding-left: 2px; }
.group td.off { color: #808080; }
.dot { display: inline-block; width: 9px; height: 9px; margin: 0 5px 0 0; background: #000; border-radius: 1px; }
.rule { display: inline-block; width: 52px; height: 1px; margin: 0 5px 3px 2px; background: #222; }

.canvas { position: relative; flex: 1; min-width: 0; overflow: hidden; background: #fff; }
.drawing { position: absolute; width: 100%; height: 100%; }
.room-no text { font: 5px "Noto Sans", sans-serif; fill: #fa4fa6; text-anchor: middle; }
.axis-no text { font: 13px "Noto Sans", sans-serif; fill: #7088a0; text-anchor: middle; }
.view-label { position: absolute; left: 2px; top: 5px; color: #000; }

.viewcube { position: absolute; right: 16px; top: 16px; display: flex; flex-direction: column; align-items: center; gap: 21px; }
.viewcube > svg { overflow: visible; }
.compass text { font: 19px "Open Sans", sans-serif; fill: #f2f2f2; stroke: #c8c8c8; text-anchor: middle; }
.face { font: 12px "Open Sans", sans-serif; fill: #85898e; text-anchor: middle; }
.viewcube button { display: flex; align-items: center; justify-content: center; gap: 5px; width: 62px; height: 14px; border-radius: 4px; background: #e9e9f5; font-size: 8px; color: #777; }

.navbar { position: absolute; right: 1px; top: 177px; border: 1px solid #b5b5b5; border-radius: 4px; background: #f6f6f6; }

.command { position: absolute; left: 20%; right: 20%; bottom: 0; height: 22px; display: flex; border: 1px solid #8a8a8a; background: #fff; }
.command-tools { width: 45px; display: flex; align-items: center; justify-content: space-around; background: linear-gradient(#6e6e6e, #8c8c8c); }
.prompt { display: flex; align-items: center; gap: 4px; padding: 0 4px; color: #999; }
.command input { flex: 1; min-width: 0; font: italic 10px "Liberation Mono", monospace; }
.command input::placeholder { color: #888; opacity: 1; }
.history { width: 12px; display: grid; place-items: center; }

/* Bottom bar */
.bottom { flex: none; display: flex; align-items: flex-start; justify-content: space-between; height: 18px; background: #b0b0b0; overflow: hidden; }
.layout-tabs { display: flex; padding-left: 9px; color: #666; }
.layout-tabs button { width: 31px; height: 15px; background: #d0d0d0; clip-path: polygon(0 0, 100% 0, calc(100% - 7px) 100%, 7px 100%); }
.layout-tabs .active { width: 60px; background: #fff; color: #000; font-weight: bold; }
.layout-tabs .plus { width: 24px; display: grid; place-items: center; }

.status { display: flex; align-items: center; width: 520px; height: 18px; padding: 3px 0 0; border-left: 1px solid #999; background: #e6e6e6; color: #111; }
.status button { flex: 1 1 20px; display: flex; align-items: center; justify-content: center; }
.status .wide { flex: 0 0 51px; font-weight: 600; }
.status .arrow { flex: 1 1 13px; }
.status .scale { flex: 0 0 28px; gap: 3px; font-weight: 600; }
.status .man { flex: 1 1 21px; }
.status .gear { flex: 1 1 22px; }
```
